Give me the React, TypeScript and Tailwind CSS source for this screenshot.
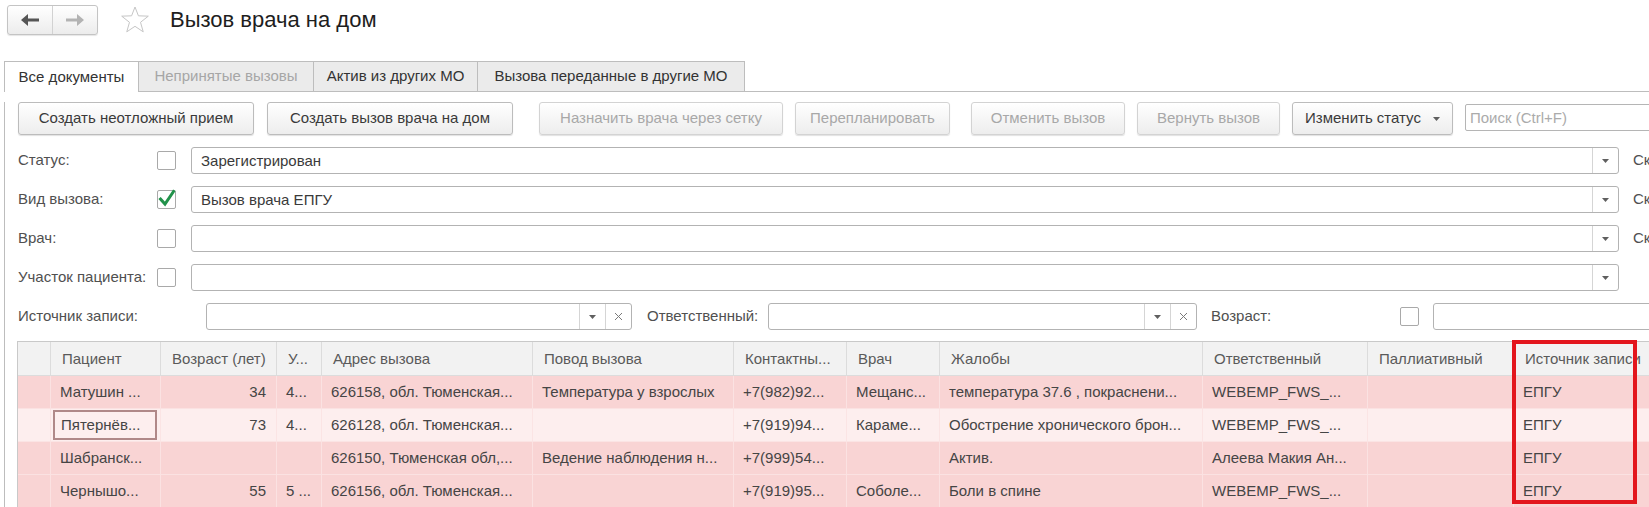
import clsx from "clsx"

type ToolButtonProps = {
  label: string
  className: string
  disabled?: boolean
  caret?: boolean
}

function Caret() {
  return (
    <svg width="7" height="4" viewBox="0 0 7 4" className="shrink-0">
      <path d="M0 0h7L3.5 4z" fill="#5f5f5f" />
    </svg>
  )
}

function Cross() {
  return (
    <svg width="9" height="9" viewBox="0 0 9 9" className="shrink-0">
      <path d="M1 1l7 7M8 1l-7 7" stroke="#7a7a7a" strokeWidth="1" />
    </svg>
  )
}

function NavArrow({ dir, color }: { dir: "left" | "right"; color: string }) {
  return (
    <svg width="18" height="12" viewBox="0 0 18 12" className={dir === "right" ? "-scale-x-100" : ""}>
      <polygon points="0,6 7,0 7,4.5 18,4.5 18,7.5 7,7.5 7,12" fill={color} />
    </svg>
  )
}

function ToolButton({ label, className, disabled, caret }: ToolButtonProps) {
  return (
    <div
      className={clsx(
        "flex h-[33px] shrink-0 items-center justify-center gap-[12px] rounded-[3px] border bg-linear-to-b from-white to-[#ededed] shadow-[0_1px_1px_rgba(0,0,0,0.12)]",
        disabled ? "border-[#d3d3d3] text-[#a8a8a8]" : "border-[#bcbcbc] text-[#3a3a3a]",
        className,
      )}
    >
      <span>{label}</span>
      {caret ? <Caret /> : null}
    </div>
  )
}

function Checkbox({ checked }: { checked?: boolean }) {
  return (
    <div className="relative h-[19px] w-[19px] shrink-0 rounded-[2px] border border-[#a9a9a9] bg-white">
      {checked ? (
        <svg width="20" height="18" viewBox="0 0 20 18" className="absolute -top-[2px] left-[-1px]">
          <path d="M3.5 10l4.5 5L16.5 2.5" fill="none" stroke="#21924a" strokeWidth="3" strokeLinecap="square" />
        </svg>
      ) : null}
    </div>
  )
}

function SelectField({ value, className, clear }: { value?: string; className: string; clear?: boolean }) {
  return (
    <div className={clsx("flex h-[27px] shrink-0 rounded-[3px] border border-[#b3b3b3] bg-white", className)}>
      <div className="flex-1 overflow-hidden whitespace-nowrap pl-[9px] leading-[25px] text-[#3a3a3a]">{value}</div>
      <div className="flex w-[26px] items-center justify-center border-l border-[#d5d5d5]">
        <Caret />
      </div>
      {clear ? (
        <div className="flex w-[26px] items-center justify-center border-l border-[#d5d5d5]">
          <Cross />
        </div>
      ) : null}
    </div>
  )
}

const columns = [
  "",
  "Пациент",
  "Возраст (лет)",
  "У...",
  "Адрес вызова",
  "Повод вызова",
  "Контактны...",
  "Врач",
  "Жалобы",
  "Ответственный",
  "Паллиативный",
  "Источник записи",
]

const rows = [
  {
    light: false,
    cells: ["", "Матушин ...", "34", "4...", "626158, обл. Тюменская...", "Температура у взрослых", "+7(982)92...", "Мещанс...", "температура 37.6 , покраснени...", "WEBEMP_FWS_...", "", "ЕПГУ"],
  },
  {
    light: true,
    cells: ["", "Пятернёв...", "73", "4...", "626128, обл. Тюменская...", "", "+7(919)94...", "Караме...", "Обострение хронического брон...", "WEBEMP_FWS_...", "", "ЕПГУ"],
  },
  {
    light: false,
    cells: ["", "Шабранск...", "", "", "626150, Тюменская обл,...", "Ведение наблюдения н...", "+7(999)54...", "", "Актив.", "Алеева Макия Ан...", "", "ЕПГУ"],
  },
  {
    light: false,
    cells: ["", "Чернышо...", "55", "5 ...", "626156, обл. Тюменская...", "", "+7(919)95...", "Соболе...", "Боли в спине", "WEBEMP_FWS_...", "", "ЕПГУ"],
  },
]

const gridCols =
  "grid grid-cols-[33px_110px_116px_45px_211px_201px_113px_93px_263px_165px_146px_200px]"

export default function App() {
  return (
    <div className="relative h-[507px] w-[1649px] overflow-hidden bg-white font-['Liberation_Sans',Arial,sans-serif] text-[15px] text-[#3a3a3a]">
      {/* title bar */}
      <div className="flex h-[61px] items-start">
        <div className="ml-[7px] mt-[5px] flex h-[30px] w-[91px] rounded-[3px] border border-[#c4c4c4] bg-linear-to-b from-white to-[#ececec] shadow-[0_1px_1px_rgba(0,0,0,0.1)]">
          <div className="flex flex-1 items-center justify-center border-r border-[#d2d2d2]">
            <NavArrow dir="left" color="#555" />
          </div>
          <div className="flex flex-1 items-center justify-center">
            <NavArrow dir="right" color="#b3b3b3" />
          </div>
        </div>
        <svg width="30" height="27" viewBox="0 0 30 27" className="ml-[22px] mt-[6px]">
          <polygon
            points="15,1 18.41,9.81 28.31,10.17 20.52,16.29 23.23,25.83 15,20.3 6.77,25.83 9.48,16.29 1.69,10.17 11.59,9.81"
            fill="none"
            stroke="#c6c6c6"
            strokeWidth="1"
          />
        </svg>
        <h1 className="ml-[20px] mt-[4px] text-[22px] leading-[32px] text-[#1e1e1e]">Вызов врача на дом</h1>
      </div>

      {/* tabs */}
      <div className="flex h-[31px] pl-[4px]">
        <div className="flex w-[134px] items-center justify-center border-l border-t border-[#bdbdbd] bg-white text-[#333]">
          Все документы
        </div>
        <div className="flex w-[175px] items-center justify-center border-b border-l border-t border-[#bdbdbd] bg-[#ebebeb] text-[#a6a6a6]">
          Непринятые вызовы
        </div>
        <div className="flex w-[164px] items-center justify-center border-b border-l border-t border-[#bdbdbd] bg-[#ebebeb] text-[#333]">
          Актив из других МО
        </div>
        <div className="flex w-[268px] items-center justify-center border border-[#bdbdbd] bg-[#ebebeb] text-[#333]">
          Вызова переданные в другие МО
        </div>
        <div className="flex-1 border-b border-[#bdbdbd]" />
      </div>

      {/* panel */}
      <div className="ml-[4px] h-[416px] border-l border-[#bdbdbd] pl-[13px]">
        <div className="mt-[10px] flex items-start">
          <ToolButton label="Создать неотложный прием" className="w-[236px]" />
          <ToolButton label="Создать вызов врача на дом" className="ml-[13px] w-[246px]" />
          <ToolButton label="Назначить врача через сетку" className="ml-[26px] w-[244px]" disabled />
          <ToolButton label="Перепланировать" className="ml-[12px] w-[155px]" disabled />
          <ToolButton label="Отменить вызов" className="ml-[21px] w-[154px]" disabled />
          <ToolButton label="Вернуть вызов" className="ml-[12px] w-[143px]" disabled />
          <ToolButton label="Изменить статус" className="ml-[12px] w-[161px] border-[#a8a8a8]" caret />
          <div className="ml-[12px] mt-[2px] h-[27px] w-[220px] shrink-0 rounded-[2px] border border-[#b5b5b5] pl-[4px] leading-[25px] text-[#ababab]">
            Поиск (Ctrl+F)
          </div>
        </div>

        {[
          { label: "Статус:", checked: false, value: "Зарегистрирован", hint: true },
          { label: "Вид вызова:", checked: true, value: "Вызов врача ЕПГУ", hint: true },
          { label: "Врач:", checked: false, value: "", hint: true },
          { label: "Участок пациента:", checked: false, value: "", hint: false },
        ].map((row) => (
          <div key={row.label} className="mt-[12px] flex h-[27px] items-center">
            <div className="w-[139px] shrink-0 whitespace-nowrap text-[#505050]">{row.label}</div>
            <Checkbox checked={row.checked} />
            <SelectField value={row.value} className="ml-[15px] w-[1428px]" />
            {row.hint ? <div className="ml-[14px] whitespace-nowrap text-[#505050]">Скрыть</div> : null}
          </div>
        ))}

        <div className="mt-[12px] flex h-[27px] items-center">
          <div className="w-[188px] shrink-0 whitespace-nowrap text-[#505050]">Источник записи:</div>
          <SelectField className="w-[426px]" clear />
          <div className="ml-[15px] w-[121px] shrink-0 whitespace-nowrap text-[#505050]">Ответственный:</div>
          <SelectField className="w-[429px]" clear />
          <div className="ml-[14px] w-[189px] shrink-0 whitespace-nowrap text-[#505050]">Возраст:</div>
          <Checkbox />
          <div className="ml-[14px] h-[27px] w-[300px] shrink-0 rounded-[3px] border border-[#b3b3b3] bg-white" />
        </div>

        {/* list */}
        <div className="relative -ml-px mt-[11px]">
          <div className={clsx(gridCols, "h-[35px] border-l border-t border-[#c9c9c9] bg-[#f2f2f2]")}>
            {columns.map((label, i) => (
              <div
                key={i}
                className="overflow-hidden whitespace-nowrap border-b border-r border-[#dcdcdc] pl-[11px] leading-[34px] text-[#5a5a5a]"
              >
                {label}
              </div>
            ))}
          </div>
          {rows.map((row, r) => (
            <div
              key={r}
              className={clsx(gridCols, "h-[33px] border-l border-[#c9c9c9]", row.light ? "bg-[#fdeeee]" : "bg-[#f9d4d4]")}
            >
              {row.cells.map((cell, c) => {
                const focused = row.light && c === 1
                return (
                  <div
                    key={c}
                    className={clsx(
                      "overflow-hidden whitespace-nowrap border-b border-r text-[#454545]",
                      row.light ? "border-[#fbe4e4]" : "border-[#fbe2e2]",
                      focused
                        ? "py-[1px] pl-[2px] pr-[3px]"
                        : c === 2
                          ? "pr-[10px] text-right leading-[32px]"
                          : c === 0
                            ? "leading-[32px]"
                            : "pl-[9px] leading-[32px]",
                    )}
                  >
                    {focused ? (
                      <div className="h-full border-2 border-[#b08888] pl-[6px] leading-[26px]">{cell}</div>
                    ) : (
                      cell
                    )}
                  </div>
                )
              })}
            </div>
          ))}
          <div className="absolute left-[1495px] top-[-1px] h-[164px] w-[125px] border-4 border-[#e3161d]" />
        </div>
      </div>
    </div>
  )
}
